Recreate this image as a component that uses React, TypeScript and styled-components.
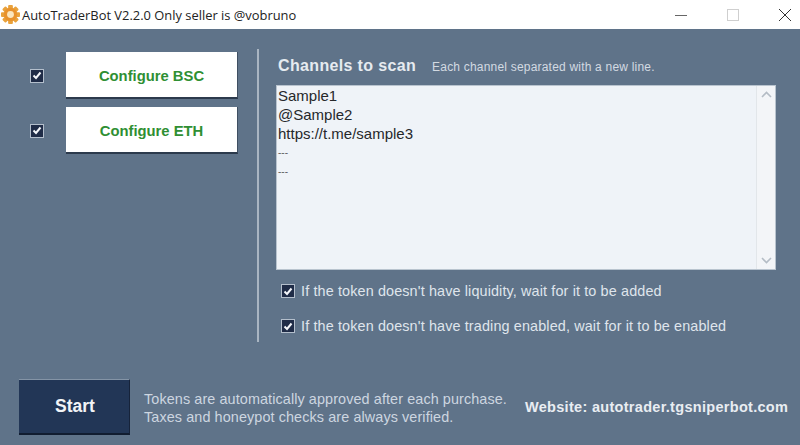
import React from 'react'
import styled, { createGlobalStyle } from 'styled-components'

const GlobalStyle = createGlobalStyle`
    html, body {
        margin: 0;
        padding: 0;
        background: #5f7389;
    }
`

const Window = styled.div`
    display: flex;
    flex-direction: column;
    width: 800px;
    height: 445px;
    overflow: hidden;
    background: #5f7389;
    font-family: "Liberation Sans", Arial, sans-serif;
`

const TitleBar = styled.header`
    display: flex;
    align-items: center;
    height: 29px;
    padding-right: 8px;
    flex-shrink: 0;
    background: #ffffff;
`

const AppIcon = styled.svg`
    width: 19px;
    height: 19px;
    margin-left: 1px;
    flex-shrink: 0;
`

const TitleText = styled.span`
    margin-left: 2px;
    font-family: "Open Sans", sans-serif;
    font-size: 12.9px;
    color: #222222;
    white-space: nowrap;
    flex: 1;
`

const WindowButtons = styled.div`
    display: flex;
    align-items: center;
    gap: 38px;
`

const WindowButton = styled.div`
    display: flex;
    align-items: center;
    justify-content: center;
    width: 14px;
    height: 29px;
    color: #333333;
`

const Main = styled.main`
    display: flex;
    padding-top: 20px;
    height: 293px;
    flex-shrink: 0;
`

const LeftColumn = styled.div`
    display: flex;
    flex-direction: column;
    gap: 8px;
    width: 257px;
    padding: 3px 0 0 30px;
    box-sizing: border-box;
`

const ConfigRow = styled.div`
    display: flex;
    align-items: center;
    gap: 22px;
`

const ConfigButton = styled.button`
    width: 172px;
    height: 47px;
    padding: 2px 0 0;
    border: none;
    border-bottom: 2px solid #2c3a4c;
    border-right: 1px solid #3f4f62;
    background: #ffffff;
    color: #2f8f33;
    font-family: "Liberation Sans", Arial, sans-serif;
    font-size: 14.8px;
    font-weight: bold;
`

const CheckBox = styled.span`
    display: flex;
    align-items: center;
    justify-content: center;
    width: 14px;
    height: 14px;
    flex-shrink: 0;
    background: #1f2c47;
    border: 1px solid #b4bfcc;
    box-sizing: border-box;
`

const Divider = styled.div`
    width: 2px;
    background: #a9b5c2;
    flex-shrink: 0;
`

const RightColumn = styled.div`
    display: flex;
    flex-direction: column;
    margin-left: 17px;
    width: 500px;
`

const HeadingRow = styled.div`
    display: flex;
    align-items: baseline;
    gap: 16px;
    height: 36px;
    padding: 8px 0 0 2px;
    box-sizing: border-box;
`

const Heading = styled.h2`
    margin: 0;
    font-size: 16px;
    font-weight: bold;
    letter-spacing: 0.35px;
    color: #e6ebf0;
`

const Hint = styled.span`
    font-size: 12px;
    letter-spacing: 0.2px;
    color: #d3dae2;
`

const ChannelBox = styled.div`
    display: flex;
    height: 185px;
    box-sizing: border-box;
    background: #eff3f8;
    border: 1px solid #b9c4cf;
`

const ChannelText = styled.div`
    flex: 1;
    padding: 0 0 0 1px;
    font-size: 15px;
    line-height: 19px;
    color: #26282b;
    white-space: pre;
`

const Dashes = styled.div`
    font-size: 10px;
    color: #5e6064;
`

const ScrollBar = styled.div`
    display: flex;
    flex-direction: column;
    justify-content: space-between;
    align-items: center;
    width: 19px;
    padding: 5px 0;
    box-sizing: border-box;
    background: #f3f5f8;
    border-left: 1px solid #e2e6ea;
    color: #b4bcc5;
`

const Options = styled.div`
    display: flex;
    flex-direction: column;
    gap: 19px;
    padding: 13px 0 0 5px;
`

const OptionRow = styled.label`
    display: flex;
    align-items: center;
    gap: 6px;
    height: 16px;
    font-size: 14.4px;
    letter-spacing: 0.13px;
    color: #dfe5ec;
    white-space: nowrap;
`

const Footer = styled.footer`
    display: flex;
    align-items: center;
    padding: 37px 0 0 19px;
`

const StartButton = styled.button`
    width: 111px;
    height: 56px;
    padding: 0 0 0 2px;
    flex-shrink: 0;
    border: none;
    border-top: 1px solid #8494a6;
    border-bottom: 2px solid #111d30;
    border-right: 1px solid #16233a;
    background: #223656;
    color: #f2f4f7;
    font-family: "Liberation Sans", Arial, sans-serif;
    font-size: 17.5px;
    font-weight: bold;
`

const Notice = styled.p`
    margin: 2px 0 0 14px;
    width: 381px;
    font-size: 14.4px;
    line-height: 18px;
    letter-spacing: 0.1px;
    color: #cdd6e0;
    white-space: nowrap;
`

const Website = styled.span`
    font-size: 14.5px;
    font-weight: bold;
    letter-spacing: 0.3px;
    color: #e9edf2;
    white-space: nowrap;
`

const Check: React.FC = () => (
  <CheckBox>
    <svg width="10" height="9" viewBox="0 0 10 9" fill="none">
      <path d="M1.5 4.5 L4 7 L8.5 1.5" stroke="#f4f6fa" strokeWidth="2" />
    </svg>
  </CheckBox>
)

const Gear: React.FC = () => {
  const teeth = [0, 45, 90, 135, 180, 225, 270, 315]
  return (
    <AppIcon viewBox="0 0 20 20">
      {teeth.map(angle => (
        <rect key={angle} x="7.5" y="0" width="5" height="5" rx="1" fill="#e9a23b" transform={`rotate(${angle} 10 10)`} />
      ))}
      <circle cx="10" cy="10" r="7" fill="#e8922c" />
      <circle cx="10" cy="10" r="3.6" fill="#fbe6bd" />
    </AppIcon>
  )
}

const App: React.FC = () => {
  return (
    <Window>
      <GlobalStyle />
      <TitleBar>
        <Gear />
        <TitleText>AutoTraderBot V2.2.0 Only seller is @vobruno</TitleText>
        <WindowButtons>
          <WindowButton>
            <svg width="14" height="14" viewBox="0 0 14 14"><path d="M1 7.5 H13" stroke="#666" strokeWidth="1" /></svg>
          </WindowButton>
          <WindowButton>
            <svg width="12" height="12" viewBox="0 0 12 12"><rect x="0.5" y="0.5" width="11" height="11" fill="none" stroke="#cfcfcf" /></svg>
          </WindowButton>
          <WindowButton>
            <svg width="14" height="14" viewBox="0 0 14 14"><path d="M1 1 L13 13 M13 1 L1 13" stroke="#333" strokeWidth="1" /></svg>
          </WindowButton>
        </WindowButtons>
      </TitleBar>
      <Main>
        <LeftColumn>
          <ConfigRow>
            <Check />
            <ConfigButton>Configure BSC</ConfigButton>
          </ConfigRow>
          <ConfigRow>
            <Check />
            <ConfigButton>Configure ETH</ConfigButton>
          </ConfigRow>
        </LeftColumn>
        <Divider />
        <RightColumn>
          <HeadingRow>
            <Heading>Channels to scan</Heading>
            <Hint>Each channel separated with a new line.</Hint>
          </HeadingRow>
          <ChannelBox>
            <ChannelText>
              <div>Sample1</div>
              <div>@Sample2</div>
              <div>https://t.me/sample3</div>
              <Dashes>---</Dashes>
              <Dashes>---</Dashes>
            </ChannelText>
            <ScrollBar>
              <svg width="11" height="7" viewBox="0 0 11 7"><path d="M1 6 L5.5 1.5 L10 6" fill="none" stroke="currentColor" strokeWidth="1.6" /></svg>
              <svg width="11" height="7" viewBox="0 0 11 7"><path d="M1 1 L5.5 5.5 L10 1" fill="none" stroke="currentColor" strokeWidth="1.6" /></svg>
            </ScrollBar>
          </ChannelBox>
          <Options>
            <OptionRow><Check />If the token doesn't have liquidity, wait for it to be added</OptionRow>
            <OptionRow><Check />If the token doesn't have trading enabled, wait for it to be enabled</OptionRow>
          </Options>
        </RightColumn>
      </Main>
      <Footer>
        <StartButton>Start</StartButton>
        <Notice>
          Tokens are automatically approved after each purchase.<br />
          Taxes and honeypot checks are always verified.
        </Notice>
        <Website>Website: autotrader.tgsniperbot.com</Website>
      </Footer>
    </Window>
  )
}

export default App
